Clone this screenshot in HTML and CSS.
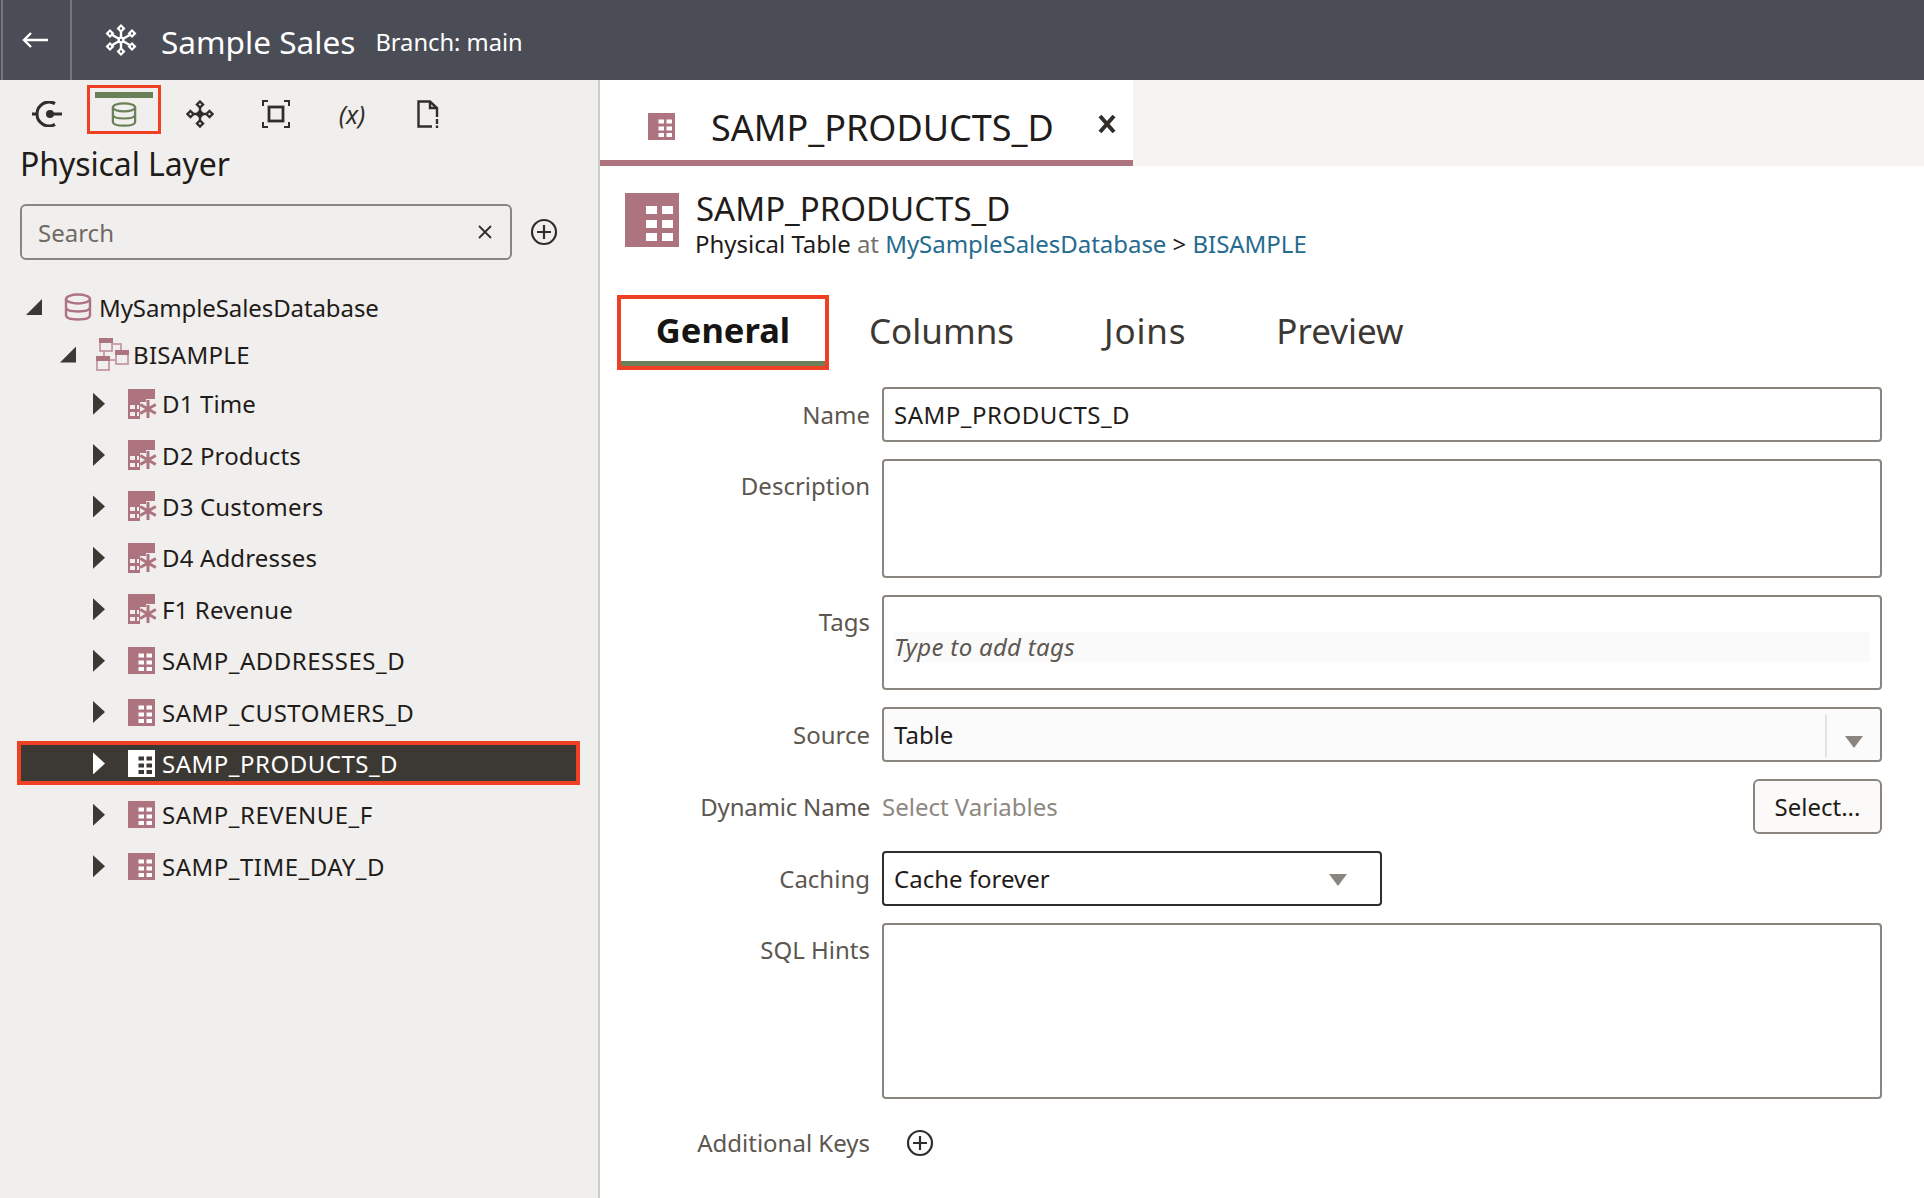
FILE: index.html
```html
<!DOCTYPE html>
<html lang="en">
<head>
<meta charset="utf-8">
<title>Sample Sales</title>
<link rel="stylesheet" href="styles.css">
</head>
<body>
<svg class="defs" width="0" height="0" aria-hidden="true">
  <symbol id="tbl" viewBox="0 0 27 27">
    <rect width="27" height="27" fill="currentColor"/>
    <g class="cells"><rect x="10.500" y="6.500" width="5.500" height="4"/><rect x="18.500" y="6.500" width="5.500" height="4"/><rect x="10.500" y="13.500" width="5.500" height="4"/><rect x="18.500" y="13.500" width="5.500" height="4"/><rect x="10.500" y="20" width="5.500" height="4"/><rect x="18.500" y="20" width="5.500" height="4"/></g>
  </symbol>
  <symbol id="star" viewBox="0 0 29 30">
    <path d="M0 0H27V10H18V13H12V30H0Z" fill="#ad7480"/>
    <path d="M2 16H7V20H2ZM9 16H11V20H9ZM2 23H7V27H2ZM9 23H11V27H9Z" fill="#f1efed"/>
    <path d="M20 11V29M12.200 15.500L27.800 24.500M12.200 24.500L27.800 15.500" stroke="#ad7480" stroke-width="3" fill="none"/>
  </symbol>
  <symbol id="db" viewBox="0 0 28 28">
    <g fill="none" stroke="currentColor" stroke-width="2.400"><ellipse cx="14" cy="6" rx="12" ry="4.500"/><path d="M2 6V22C2 25 7 26.500 14 26.500S26 25 26 22V6M2 14C2 17 7 18.500 14 18.500S26 17 26 14"/></g>
  </symbol>
  <symbol id="plus" viewBox="0 0 28 28">
    <g fill="none" stroke="#312d2a" stroke-width="2.200"><circle cx="14" cy="14" r="12"/><path d="M14 7V21M7 14H21"/></g>
  </symbol>
</svg>

<header class="topbar">
  <button class="back" aria-label="Back">
    <svg width="28" height="20" viewBox="0 0 28 20"><path d="M27 10H3M10 3L3 10L10 17" fill="none" stroke="#fff" stroke-width="2.400"/></svg>
  </button>
  <svg class="logo" width="32" height="32" viewBox="0 0 32 32">
    <path d="M16 4V28M5.600 10L26.400 22M5.600 22L26.400 10" stroke="#fff" stroke-width="2.400"/>
    <g fill="#fff"><path d="M16 0L20.500 4.500L16 9L11.500 4.500Z"/><path d="M16 23L20.500 27.500L16 32L11.500 27.500Z"/><path d="M5 5L9.500 9.500L5 14L.5 9.500Z"/><path d="M27 5L31.500 9.500L27 14L22.500 9.500Z"/><path d="M5 18L9.500 22.500L5 27L.5 22.500Z"/><path d="M27 18L31.500 22.500L27 27L22.500 22.500Z"/><circle cx="16" cy="16" r="3.500"/></g>
    <g fill="#4a4d56"><circle cx="16" cy="16" r="1.200"/><rect x="15" y="3.500" width="2" height="2"/><rect x="15" y="26.500" width="2" height="2"/><rect x="4" y="8.500" width="2" height="2"/><rect x="26" y="8.500" width="2" height="2"/><rect x="4" y="21.500" width="2" height="2"/><rect x="26" y="21.500" width="2" height="2"/></g>
  </svg>
  <h1 class="app">Sample Sales</h1>
  <span class="branch">Branch: main</span>
</header>

<div class="main">
  <aside class="side">
    <nav class="tools">
      <span class="tool">
        <svg width="30" height="26" viewBox="0 0 30 26"><path d="M23 2.600A12 12 0 1 0 23 23.400" fill="none" stroke="#312d2a" stroke-width="3"/><path d="M0 13H5M18 13H30" stroke="#312d2a" stroke-width="3"/><circle cx="18" cy="13" r="4" fill="#312d2a"/></svg>
      </span>
      <span class="tool active">
        <svg class="dbgreen" width="26" height="25" viewBox="0 0 28 28" preserveAspectRatio="none"><use href="#db"/></svg>
      </span>
      <span class="tool">
        <svg width="28" height="28" viewBox="0 0 28 28"><path d="M14 7V21M7 14H21" stroke="#312d2a" stroke-width="2.400"/><g fill="none" stroke="#312d2a" stroke-width="2.400"><path d="M14 1.500L17 4.500L14 7.500L11 4.500Z"/><path d="M14 20.500L17 23.500L14 26.500L11 23.500Z"/><path d="M4.500 11L7.500 14L4.500 17L1.500 14Z"/><path d="M23.500 11L26.500 14L23.500 17L20.500 14Z"/><path d="M14 11L17 14L14 17L11 14Z"/></g></svg>
      </span>
      <span class="tool">
        <svg width="28" height="28" viewBox="0 0 28 28"><g fill="none" stroke="#312d2a"><rect x="7" y="7" width="14" height="14" stroke-width="2.800"/><path d="M1 6V1H6M22 1H27V6M27 22V27H22M6 27H1V22" stroke-width="2"/></g></svg>
      </span>
      <span class="tool fx">(x)</span>
      <span class="tool">
        <svg width="22" height="28" viewBox="0 0 22 28"><path d="M15 26.500H1.500V1.500H13L20 8V17M13 1.500V8H20" fill="none" stroke="#312d2a" stroke-width="2.400"/><path d="M20 19V24M20 25.500V28" stroke="#312d2a" stroke-width="2.400"/></svg>
      </span>
    </nav>
    <h2 class="layer">Physical Layer</h2>
    <div class="searchrow">
      <div class="search">
        <span class="ph">Search</span>
        <svg width="14" height="14" viewBox="0 0 14 14"><path d="M1 1L13 13M13 1L1 13" stroke="#312d2a" stroke-width="1.800"/></svg>
      </div>
      <svg class="plus" width="28" height="28"><use href="#plus"/></svg>
    </div>
    <ul class="tree">
      <li class="node n0"><i class="tri open"></i><svg class="rose" width="28" height="28"><use href="#db"/></svg><span class="gap8">MySampleSalesDatabase</span></li>
      <li class="node n1"><i class="tri open"></i>
        <svg class="schema" width="33" height="33" viewBox="0 0 33 33"><path d="M16 6H25V13M8 13V19M13 22H19" fill="none" stroke="#c9a2ab" stroke-width="2"/><g fill="#f1efed" stroke="#c49aa4" stroke-width="1.800"><rect x="4" y="1" width="12" height="12"/><rect x="1" y="19" width="12" height="13"/><rect x="20" y="13" width="12" height="13"/></g><path d="M3 0H17V5H3ZM0 18H14V23H0ZM19 12H33V17H19Z" fill="#ad7480"/></svg>
        <span class="gap5 caps-s">BISAMPLE</span></li>
      <li class="node item"><i class="tri"></i><svg class="ic" width="29" height="30"><use href="#star"/></svg><span class="soft-s">D1 Time</span></li>
      <li class="node item"><i class="tri"></i><svg class="ic" width="29" height="30"><use href="#star"/></svg><span class="soft-s">D2 Products</span></li>
      <li class="node item"><i class="tri"></i><svg class="ic" width="29" height="30"><use href="#star"/></svg><span class="soft-s">D3 Customers</span></li>
      <li class="node item"><i class="tri"></i><svg class="ic" width="29" height="30"><use href="#star"/></svg><span class="soft-s">D4 Addresses</span></li>
      <li class="node item"><i class="tri"></i><svg class="ic" width="29" height="30"><use href="#star"/></svg><span class="soft-s">F1 Revenue</span></li>
      <li class="node item"><i class="tri"></i><svg class="ic rose" width="27" height="27"><use href="#tbl"/></svg><span class="caps">SAMP_ADDRESSES_D</span></li>
      <li class="node item"><i class="tri"></i><svg class="ic rose" width="27" height="27"><use href="#tbl"/></svg><span class="caps">SAMP_CUSTOMERS_D</span></li>
      <li class="node item sel"><i class="tri"></i><svg class="ic" width="27" height="27"><use href="#tbl"/></svg><span class="caps">SAMP_PRODUCTS_D</span></li>
      <li class="node item"><i class="tri"></i><svg class="ic rose" width="27" height="27"><use href="#tbl"/></svg><span class="caps">SAMP_REVENUE_F</span></li>
      <li class="node item"><i class="tri"></i><svg class="ic rose" width="27" height="27"><use href="#tbl"/></svg><span class="caps">SAMP_TIME_DAY_D</span></li>
    </ul>
  </aside>

  <section class="content">
    <div class="tabbar">
      <div class="doc">
        <svg class="rose doc-ic" width="27" height="27"><use href="#tbl"/></svg>
        <span class="doc-title">SAMP_PRODUCTS_D</span>
        <svg class="doc-x" width="20" height="20" viewBox="0 0 20 20"><path d="M3 2L17 18M17 2L3 18" stroke="#312d2a" stroke-width="4"/></svg>
      </div>
    </div>
    <div class="head">
      <svg class="rose" width="54" height="54" viewBox="0 0 27 27"><use href="#tbl"/></svg>
      <div class="head-text">
        <div class="head-title">SAMP_PRODUCTS_D</div>
        <div class="crumb">Physical Table <span class="at">at</span> <a>MySampleSalesDatabase</a> &gt; <a>BISAMPLE</a></div>
      </div>
    </div>
    <div class="tabs">
      <span class="tab on">General</span>
      <span class="tab">Columns</span>
      <span class="tab joins">Joins</span>
      <span class="tab">Preview</span>
    </div>
    <form class="form">
      <label class="lab">Name</label>
      <div class="field h55"><span class="caps">SAMP_PRODUCTS_D</span></div>
      <label class="lab top">Description</label>
      <div class="field h119"></div>
      <label class="lab top">Tags</label>
      <div class="field h95 tags"><div class="tagin">Type to add tags</div></div>
      <label class="lab">Source</label>
      <div class="field h55 soft"><span>Table</span><i class="divider"></i><i class="caret low"></i></div>
      <label class="lab dynlab">Dynamic Name</label>
      <div class="dyn"><span class="muted">Select Variables</span><span class="btn">Select...</span></div>
      <label class="lab">Caching</label>
      <div class="field h55 cache"><span>Cache forever</span><i class="caret"></i></div>
      <label class="lab top">SQL Hints</label>
      <div class="field h176"></div>
      <label class="lab keys">Additional Keys</label>
      <div class="keyrow"><svg width="28" height="28"><use href="#plus"/></svg></div>
    </form>
  </section>
</div>
</body>
</html>
```
FILE: styles.css
```css
* { box-sizing: border-box; }
html, body { margin: 0; height: 100%; overflow: hidden; }
body { width: 1924px; height: 1198px; font-family: "Noto Sans", "Open Sans", sans-serif; color: #1f1c1a; background: #fff; display: flex; flex-direction: column; }
.defs { position: absolute; }
svg { display: block; flex: none; }
.rose { color: #ad7480; }
.cells { fill: var(--cell, #fff); }
.caps { letter-spacing: 0.5px; }
.caps-s { letter-spacing: 0.3px; }
.soft-s { letter-spacing: 0.15px; }

.topbar { height: 80px; flex: none; background: #4a4d56; color: #fff; display: flex; align-items: center; }
.back { width: 71px; height: 80px; margin-left: 1px; padding: 0; background: none; border: solid #74767d; border-width: 0 2px; display: flex; align-items: center; justify-content: center; margin-right: 33px; }
.back svg { margin-right: 4px; }
.logo { margin-right: 24px; margin-bottom: 0; }
.app { margin: 4px 0 0; font-size: 31.600px; font-weight: 400; line-height: 80px; }
.branch { font-size: 23.700px; margin: 4px 0 0 20px; }

.main { flex: 1; display: flex; min-height: 0; }
.side { width: 600px; flex: none; background: #f1efed; border-right: 2px solid #d0cdc9; padding: 5px 0 0 0; }
.tools { height: 49px; display: flex; align-items: center; padding-left: 9px; color: #312d2a; }
.tool { width: 76px; height: 49px; display: flex; align-items: center; justify-content: center; padding-top: 9px; }
.tool.active { position: relative; width: 74px; margin: 0 1px 0 2px; border: 3px solid #ef4023; padding: 9px 0 0; }
.tool.active::before { content: ""; position: absolute; left: 5px; right: 5px; top: 4px; height: 6px; background: #6a8058; }
.dbgreen { color: #6a8058; }
.fx { font-style: italic; font-size: 25px; }
.layer { margin: 9px 0 0 20px; font-size: 32px; font-weight: 400; line-height: 42px; letter-spacing: -0.1px; }
.searchrow { display: flex; align-items: center; margin: 19px 0 0 20px; gap: 18px; }
.search { width: 492px; height: 56px; background: #f1efed; border: 2px solid #8a857e; border-radius: 6px; display: flex; align-items: center; justify-content: space-between; padding: 0 18px 0 16px; font-size: 24px; }
.ph { color: #6f6a64; }

.tree { list-style: none; margin: 23px 0 0; padding: 0; font-size: 24px; }
.node { display: flex; align-items: center; height: 48px; white-space: nowrap; }
.tri { flex: none; display: block; width: 12px; height: 22px; background: #3c3833; clip-path: polygon(0 0, 100% 50%, 0 100%); margin-right: 23px; }
.tri.open { width: 16px; height: 16px; clip-path: polygon(100% 0, 100% 100%, 0 100%); margin-right: 22px; }
.n0 { padding-left: 26px; }
.n1 { height: 47px; padding-left: 60px; }
.n1 .tri { margin-right: 20px; }
.gap8 { margin-left: 7px; letter-spacing: -0.1px; }
.gap5 { margin-left: 4px; }
.item { height: 51.400px; padding-left: 93px; }
.item .ic { margin-right: 5px; }
.item .rose { margin-right: 7px; }
.sel { height: 44px; margin: 3.700px 20px 3.700px 17px; padding-left: 72px; width: 563px; background: #3c3833; border: 4px solid #ef4023; color: #fff; --cell: #3c3833; }
.sel .tri { background: #fff; }
.sel .ic { color: #fff; margin-right: 7px; }

.content { flex: 1; min-width: 0; display: flex; flex-direction: column; }
.tabbar { height: 86px; flex: none; background: #f5f4f2; }
.doc { width: 533px; height: 86px; background: #fff; border-bottom: 6px solid #ad7480; display: flex; align-items: center; padding: 12px 0 0 48px; }
.doc-title { font-size: 36px; margin: 2px 0 0 36px; }
.doc-x { margin: 0 0 4px 43px; }
.head { display: flex; margin: 27px 0 0 25px; }
.head-text { margin-left: 17px; margin-top: -6px; }
.head-title { font-size: 33px; line-height: 44px; }
.crumb { font-size: 24px; line-height: 30px; margin: -2px 0 0 -1px; letter-spacing: -0.03px; }
.at { color: #75706a; }
.crumb a { color: #266b8f; }
.tabs { display: flex; margin: 36px 0 0 17px; font-size: 35px; color: #3c3833; }
.tab { display: block; height: 75px; line-height: 72px; margin-right: 90px; }
.tab.on { width: 212px; margin-right: 40px; text-align: center; font-size: 34.500px; line-height: 62px; font-weight: 700; color: #161513; border: 4px solid #ef4023; box-shadow: inset 0 -5px 0 #6a8058; }
.joins { letter-spacing: 0.8px; }

.form { display: grid; grid-template-columns: 270px 1000px; column-gap: 12px; row-gap: 17px; margin-top: 17px; font-size: 24px; }
.lab { color: #5c5751; text-align: right; align-self: center; }
.lab.top { align-self: start; padding-top: 10px; }
.dynlab { letter-spacing: -0.2px; }
.field { background: #fff; border: 2px solid #8a857e; border-radius: 4px; display: flex; align-items: center; padding: 0 10px; position: relative; }
.h55 { height: 55px; }
.h119 { height: 119px; }
.h95 { height: 95px; }
.h176 { height: 176px; }
.tags { padding: 0 10px; align-items: center; }
.tagin { width: 100%; height: 30px; line-height: 30px; background: #fbfafa; color: #5c5751; font-style: italic; margin-top: 8px; letter-spacing: 0.3px; }
.soft { background: #fbfbfb; }
.divider { position: absolute; right: 53px; top: 6px; width: 2px; height: 42px; background: #e4e2e0; }
.caret { position: absolute; right: 18px; top: 23px; width: 18px; height: 12px; background: #8a857e; clip-path: polygon(0 0, 100% 0, 50% 100%); }
.caret.low { top: 27px; right: 17px; }
.cache { width: 500px; border-color: #312d2a; }
.cache .caret { right: 33px; top: 21px; }
.dyn { height: 55px; display: flex; align-items: center; justify-content: space-between; }
.muted { color: #8d8881; }
.btn { width: 129px; height: 55px; background: #fbfaf8; border: 2px solid #8a857e; border-radius: 6px; display: flex; align-items: center; justify-content: center; }
.keys { padding-top: 10px; }
.keyrow { padding: 13px 0 0 24px; }
```
